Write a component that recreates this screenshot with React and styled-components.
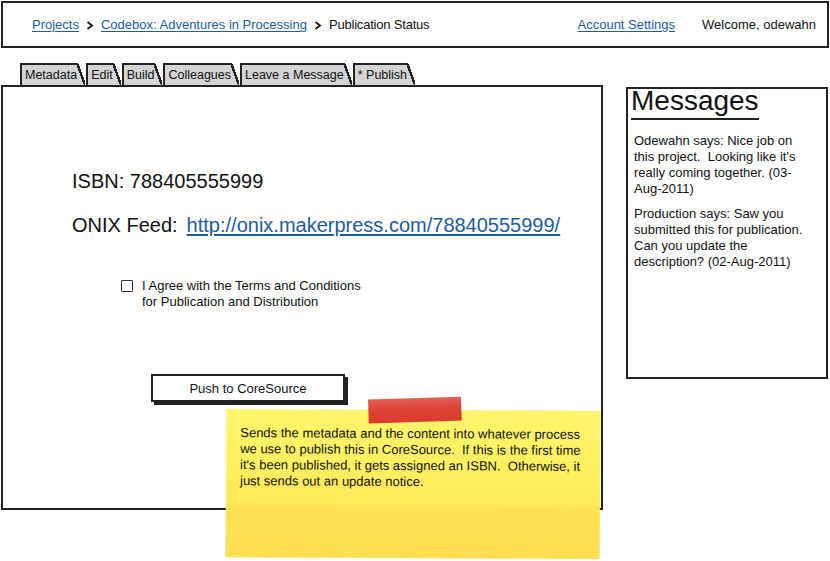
import React from "react";
import styled, { createGlobalStyle } from "styled-components";

const GlobalStyle = createGlobalStyle`
  html, body {
    margin: 0;
    padding: 0;
    background: #fff;
  }
  body {
    font-family: "Liberation Sans", Arial, sans-serif;
    color: #111;
  }
  * {
    box-sizing: border-box;
  }
`;

const INK = "#222";
const LINK = "#1c5ba5";

const Page = styled.div`
  position: relative;
  width: 830px;
  height: 561px;
  padding: 1px 0 0 1px;
`;

const Header = styled.header`
  width: 828px;
  height: 47px;
  border: 2px solid ${INK};
  display: flex;
  align-items: center;
  justify-content: space-between;
  padding: 0 11px 0 29px;
  font-size: 13px;
`;

const Crumbs = styled.nav`
  display: flex;
  align-items: center;
  gap: 7px;
`;

const UserArea = styled.div`
  display: flex;
  align-items: center;
  gap: 27px;
`;

const Link = styled.a`
  color: ${LINK};
  text-decoration: underline;
  text-underline-offset: 2px;
  font-size: ${({ $big }) => ($big ? "20px" : "inherit")};
  margin-left: ${({ $big }) => ($big ? "9px" : "0")};
  cursor: pointer;
`;

const Current = styled.span`
  color: #111;
  letter-spacing: -0.2px;
`;

const Chevron = () => (
  <svg width="8" height="9" viewBox="0 0 8 9" style={{ marginTop: 2 }}>
    <polyline points="1.5,1 6,4.5 1.5,8" fill="none" stroke="#222" strokeWidth="2" />
  </svg>
);

const Body = styled.div`
  display: flex;
  align-items: flex-start;
  margin-top: 15px;
`;

const LeftColumn = styled.div`
  width: 602px;
  display: flex;
  flex-direction: column;
`;

const Tabs = styled.div`
  display: flex;
  height: 22px;
  padding-left: 19px;
`;

const Tab = styled.div`
  position: relative;
  height: 22px;
  padding: 2px 0 0 3px;
  margin-right: 9px;
  background: #d4d4d4;
  border-top: 2px solid ${INK};
  border-left: 2px solid ${INK};
  font-size: 12.5px;
  line-height: 17px;
  white-space: nowrap;

  &::after {
    content: "";
    position: absolute;
    top: -2px;
    bottom: 0;
    right: -8px;
    width: 8px;
    background: linear-gradient(
      to top right,
      #d4d4d4 calc(50% - 1.2px),
      ${INK} calc(50% - 1.2px),
      ${INK} calc(50% + 1.2px),
      transparent calc(50% + 1.2px)
    );
  }
`;

const MainPanel = styled.section`
  height: 425px;
  border: 2px solid ${INK};
  display: flex;
  flex-direction: column;
  align-items: flex-start;
  padding: 82px 0 0 69px;
`;

const Field = styled.div`
  font-size: 20px;
  line-height: 24px;
  margin-top: ${({ $gap }) => $gap || 0}px;
  white-space: nowrap;
`;

const Agree = styled.label`
  display: flex;
  align-items: flex-start;
  gap: 9px;
  margin: 41px 0 0 49px;
  font-size: 13px;
  line-height: 16px;
`;

const CheckBox = styled.span`
  width: 12px;
  height: 12px;
  margin-top: 2px;
  border: 1.5px solid #333;
  border-radius: 1px;
  flex: none;
`;

const PushButton = styled.button`
  width: 194px;
  height: 28px;
  margin: 64px 0 0 79px;
  border: 2px solid ${INK};
  background: #fff;
  box-shadow: 3px 3px 0 ${INK};
  font-family: inherit;
  font-size: 13px;
  color: #111;
  padding: 0;
`;

const MessagesPanel = styled.aside`
  width: 202px;
  height: 292px;
  margin: 24px 0 0 23px;
  border: 2px solid ${INK};
  padding: 0 0 0 3px;
`;

const MessagesTitle = styled.h2`
  display: inline-block;
  margin: 0;
  font-size: 28px;
  font-weight: 400;
  line-height: 24px;
  padding-bottom: 5px;
  border-bottom: 2px solid ${INK};
`;

const Message = styled.p`
  margin: ${({ $first }) => ($first ? "13px" : "9px")} 0 0 3px;
  font-size: 13px;
  line-height: 16px;
  white-space: nowrap;
`;

const StickyNote = styled.div`
  position: absolute;
  left: 226px;
  top: 410px;
  width: 374px;
  height: 148px;
  padding: 16px 0 0 14px;
  background: linear-gradient(
    to bottom,
    #fff56c 0%,
    #fff062 35%,
    #ffea5a 62%,
    #ffe152 67%,
    #ffdf50 100%
  );
  box-shadow: 0 0 1px rgba(200, 170, 0, 0.4);
  font-size: 13px;
  line-height: 16px;
  white-space: nowrap;
  transform: rotate(0.3deg);
`;

const Tape = styled.div`
  position: absolute;
  left: 142px;
  top: -12px;
  width: 93px;
  height: 24px;
  background: linear-gradient(to bottom, #e0584d, #dc3a2f 45%, #d9302a);
  opacity: 0.95;
  transform: rotate(-2deg);
`;

export default function App() {
  const tabs = ["Metadata", "Edit", "Build", "Colleagues", "Leave a Message", "* Publish"];

  return (
    <Page>
      <GlobalStyle />

      {/* top bar */}
      <Header>
        <Crumbs>
          <Link>Projects</Link>
          <Chevron />
          <Link>Codebox: Adventures in Processing</Link>
          <Chevron />
          <Current>Publication Status</Current>
        </Crumbs>
        <UserArea>
          <Link>Account Settings</Link>
          <span>Welcome, odewahn</span>
        </UserArea>
      </Header>

      <Body>
        <LeftColumn>
          <Tabs>
            {tabs.map((t) => (
              <Tab key={t}>{t}</Tab>
            ))}
          </Tabs>

          <MainPanel>
            <Field>ISBN: 788405555999</Field>
            <Field $gap={20}>
              ONIX Feed:<Link $big>http://onix.makerpress.com/78840555999/</Link>
            </Field>
            <Agree>
              <CheckBox />
              <span>
                I Agree with the Terms and Conditions
                <br />
                for Publication and Distribution
              </span>
            </Agree>
            <PushButton>Push to CoreSource</PushButton>
          </MainPanel>
        </LeftColumn>

        <MessagesPanel>
          <MessagesTitle>Messages</MessagesTitle>
          <Message $first>
            Odewahn says: Nice job on
            <br />
            this project.&nbsp; Looking like it's
            <br />
            really coming together. (03-
            <br />
            Aug-2011)
          </Message>
          <Message>
            Production says: Saw you
            <br />
            submitted this for publication.
            <br />
            Can you update the
            <br />
            description? (02-Aug-2011)
          </Message>
        </MessagesPanel>
      </Body>

      {/* annotation */}
      <StickyNote>
        <Tape />
        Sends the metadata and the content into whatever process
        <br />
        we use to publish this in CoreSource.&nbsp; If this is the first time
        <br />
        it's been published, it gets assigned an ISBN.&nbsp; Otherwise, it
        <br />
        just sends out an update notice.
      </StickyNote>
    </Page>
  );
}
